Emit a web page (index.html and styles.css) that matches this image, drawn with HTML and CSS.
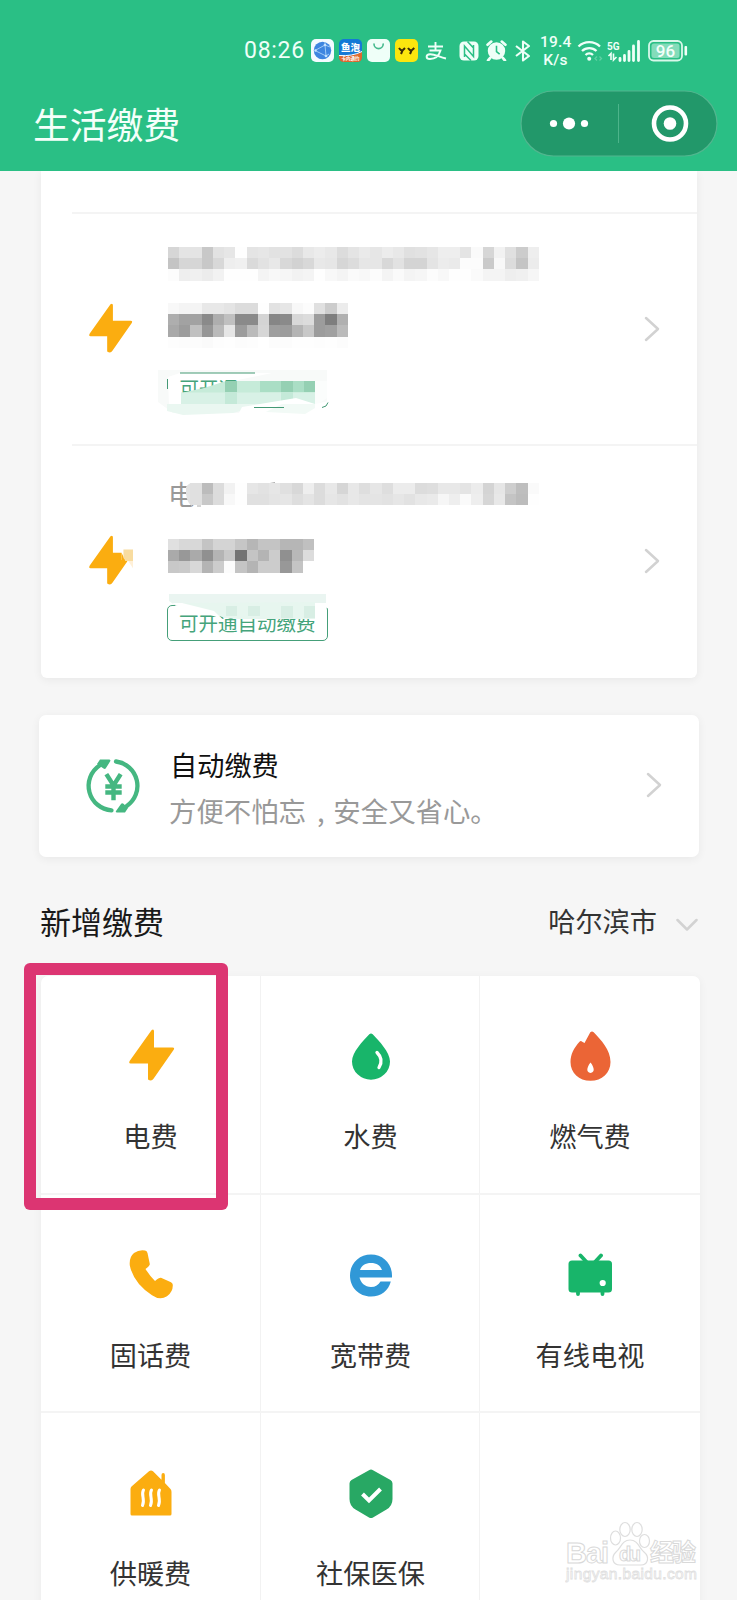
FILE: index.html
```html
<!DOCTYPE html>
<html lang="zh-CN">
<head>
<meta charset="utf-8">
<title>生活缴费</title>
<link rel="stylesheet" href="styles.css">
</head>
<body>
<header class="header">
  <div class="status">
    <span class="time">08:26</span>
    <svg class="app" viewBox="0 0 23 23"><rect width="23" height="23" rx="5" fill="#f4fbff"/><circle cx="11.5" cy="11.5" r="8.7" fill="#3f86e0"/><path d="M4 11.5 14 6 15 17 4 11.5M14 6l5 2M15 17l3-2M14 3v3" fill="none" stroke="#9fcbf7" stroke-width="1"/><g fill="#c5e2ff"><circle cx="14" cy="6" r="1.3"/><circle cx="15" cy="17" r="1.3"/><circle cx="4.5" cy="11.5" r="1.2"/></g></svg>
    <svg class="app" viewBox="0 0 23 23"><rect width="23" height="23" rx="5" fill="#1379d6"/><path d="M0 17q13 1 23-4v5q0 5-5 5H5q-5 0-5-5z" fill="#e0682c"/><path d="M0 16.5q13 1 23-4" fill="none" stroke="#fff"/><text x="11.5" y="12" class="fish">鱼泡</text><text x="11.5" y="21.3" class="fishsub">卡内通约</text></svg>
    <svg class="app" viewBox="0 0 23 23"><rect width="23" height="23" rx="5" fill="#effff8"/><path d="M7 5a4.6 4.6 0 0 0 9.2 0" fill="none" stroke="#45ba8d" stroke-width="1.6" stroke-linecap="round"/></svg>
    <svg class="app" viewBox="0 0 23 23"><rect width="23" height="23" rx="5" fill="#fbe60e"/><path d="M4 9q1.500 2.500 3.500 2.500L10 9M7.500 11.500 6 15M13 9q1.500 2.500 3.500 2.500L19.300 9M16.500 11.500 15 15" fill="none" stroke="#3a2d08" stroke-width="2"/></svg>
    <svg class="alipay" viewBox="0 0 22 20"><path d="M3 5.500h15M10.500 1v8.500M4.500 9.500h11c-1.500 5-5.500 8.500-10.500 8.500-4.500 0-4.500-4.500 0-4.800C10 13 14 16 21 17.500" fill="none" stroke="#effff8" stroke-width="1.900"/></svg>
    <svg class="nfc" viewBox="0 0 20 20"><rect x=".5" y=".5" width="19" height="19" rx="4.500" fill="#effff8"/><path d="M5.500 16V5L14.500 15.500V4M8.500 .500 14.500 7M5.500 13l6.500 6.500" fill="none" stroke="#2abf85" stroke-width="1.500"/></svg>
    <svg class="alarm" viewBox="0 0 20 20"><circle cx="10" cy="10.500" r="8.300" fill="#effff8"/><path d="M1.500 4.500 5 1.500M18.500 4.500 15 1.500M4 17l-2 2.500M16 17l2 2.500" stroke="#effff8" stroke-width="2.600" stroke-linecap="round"/><path d="M10 5.500v5.500l3 2.500" fill="none" stroke="#2abf85" stroke-width="1.500"/></svg>
    <svg class="bt" viewBox="0 0 16 22"><path d="M1 6l13 10-6 4.500V1.500L14 6 1 16" fill="none" stroke="#effff8" stroke-width="2.100" stroke-linejoin="round"/></svg>
    <span class="speed">19.4<br>K/s</span>
    <svg class="wifi" viewBox="0 0 26 22"><path d="M1.500 6.500a15.500 15.500 0 0 1 21.500 0M5 11a10.500 10.500 0 0 1 14.500 0M8.500 15a5.500 5.500 0 0 1 7.500 0" fill="none" stroke="#effff8" stroke-width="2.300"/><circle cx="12.200" cy="18.700" r="2" fill="#effff8"/><path d="m20 16.500-2 2 2 2M22.500 16.500l2 2-2 2" fill="none" stroke="#5fd0a4" stroke-width="1.300"/></svg>
    <svg class="signal" viewBox="0 0 34 22"><text x="0" y="10" class="five">5G</text><path d="M4 20v-6.500L1.500 16M6.500 13.500V20L9.500 17" fill="none" stroke="#effff8" stroke-width="1.600"/><path d="M13 20.500v-2M17.500 20.500v-5M22 20.500v-9M26.500 20.500V6M31.500 20.500V1.500" stroke="#effff8" stroke-width="2.800" stroke-linecap="round"/></svg>
    <svg class="battery" viewBox="0 0 40 22"><rect x="1" y="1" width="33" height="19.500" rx="4.500" fill="none" stroke="#d8f8ea" stroke-width="1.800"/><rect x="3.500" y="3.500" width="28" height="14.500" rx="2.500" fill="#84dcba"/><rect x="36.500" y="6" width="2.600" height="9.500" rx="1" fill="#effff8"/><text x="17.500" y="16.600" class="charge">96</text></svg>
  </div>
  <div class="navbar">
    <h1 class="title">生活缴费</h1>
    <svg class="capsule" viewBox="0 0 198 67"><rect x="1" y="1" width="196" height="65" rx="32.500" fill="#22986a" stroke="#52b68f" stroke-width="1.200"/><g fill="#fff"><circle cx="33.500" cy="33.500" r="3.600"/><circle cx="49" cy="33.500" r="6.100"/><circle cx="64.500" cy="33.500" r="3.600"/><circle cx="150" cy="33.500" r="6.300"/></g><path d="M98.500 14v39" stroke="#4db48b"/><circle cx="150" cy="33.500" r="16" fill="none" stroke="#fff" stroke-width="4.600"/></svg>
  </div>
</header>

<main class="page">
  <section class="card accounts">
    <div class="account">
      <svg class="bolt" viewBox="0 0 46 52"><use href="#bolt"/></svg>
      <div class="info">
        <svg class="line" data-y="5" data-cells="d6e4e4c8e2e6fee4e6e2e2dce8ece8dce4eae6ece8e0e2e6eeeee4fad6f2e0ccee/c4d6d6c8d8eef0dae2e8d8d2d8e8e6d6dce6e6d8e2d4d4e4eceafcfccaf8dcc4ec/fceef0ecf2fefefef4f8f6f2f4fef8f4faf8fcf4faf4f6fcf8fefefaf4f4eef0f6"></svg>
        <svg class="line" data-y="5" data-cells="f8f4f4e8e8e4dcdcfee2e6f8fce0ccec/aea2a28aaec08a8ad4868ad8dc9c7eb0/a89cc096bae69cbad69e9cb4c89ca0ba/fdfcfcfafdfefcfdfffcfcfefefdfefc"></svg>
        <div class="tag faded">
          <svg class="haze" viewBox="-12 -4 182 52"><path d="M-10-3h169v35l-12 8H5l-15-11z" fill="#f8faf9"/><path d="M0 4 12 0h92L70 7 38 14 13 19v14H1z" fill="#fff"/><path d="M12 0H87" stroke="#449975" stroke-width="1.200"/><path d="M-.500 6v10" stroke="#449975"/><text x="11.500" y="22.500" class="tagghost">可开通</text><path d="M13 20 36 15 58 8H147V31H13z" fill="#c6ebd9"/><path d="M13 19.500H147V31H13z" fill="#d8f1e6"/><path d="M57 8H69V19H57zM113 8h12v11h-12zM136 8h11v11h-11z" fill="#95d0b3"/><path d="M92 8h21v11H92zM125 8h11v11h-11z" fill="#aadec5"/><path d="M57 19h12v12H57zM113 19h12v12h-12z" fill="#c4e9d8"/><path d="M-1 31H98L65 40 15 42-1 38z" fill="#eaf7f1"/><path d="M147 8h12v17l-12 8z" fill="#fbfdfc"/><path d="M74 34l54-9 19 6 14-3v8l-18 6H70z" fill="#fff"/><path d="M98 39l16-8h33v4l-10 6z" fill="#f2faf6"/><path d="M86 34.500h30M154 34.500q5-.500 6-5" fill="none" stroke="#449975"/></svg>
        </div>
      </div>
      <svg class="chevron" viewBox="0 0 16 26"><path d="M2 2 14 13 2 24"/></svg>
    </div>
    <div class="account">
      <svg class="bolt" viewBox="0 0 46 52"><use href="#bolt"/><path d="M34 15h12v21l-6-9-6-1z" fill="#fff"/><path d="M34 18.500l4 8-4 6z" fill="#fbad10"/><path d="M36 15h11v12h-8l-3-3z" fill="#f8dca0"/><path d="M41 27h6v9z" fill="#fff0d8"/></svg>
      <div class="info">
        <div class="line masked">电<svg class="line over" data-y="9" data-from="2" data-cells="e0bcdcf2fee6e2e6e0d8eedce8d6e8dee6deececdcdee8e8e4ecd4e6cebefa/e0c8dcf8fee0e0e4e6dee4dce6e2e8e4e4e2e6e2e8eaf6eefaeed6e8c4bcfe"><path d="M18 13q3-4 6-4v23q-7-4-6-19" fill="#e2e2e2"/><path d="M86 9.500h7M102 9.500l5-1M29 32h4" stroke="#aaa" stroke-width="1"/></svg></div>
        <svg class="line" data-y="9" data-cells="e0d8d8c4d4d4c6b6c4c4b6b6c0/aa98aa90b4c874c4b4cc90b8dc/c8cad8b4ccfcc4b4cccc98c4ff"></svg>
        <div class="tag">可开通自动缴费
          <svg class="haze" viewBox="-12 -14 182 62"><path d="M1-11H158V0q-4 0-8 1H8L1-4z" fill="#eaf5f1"/><path d="M14-2 147-3V14H70L57 13z" fill="#e7f6ef"/><path d="M160-2v5l-13-1v-4zM4-2h10l32 8 8 8-20-7-20-4z" fill="#fff"/><path d="M58 1h11v10H58zM80 1h12v10H80zM113 1h12v12h-12zM136 1h11v12h-11z" fill="#d8eee4"/></svg>
        </div>
      </div>
      <svg class="chevron" viewBox="0 0 16 26"><path d="M2 2 14 13 2 24"/></svg>
    </div>
  </section>

  <section class="card auto">
    <svg class="cycle" viewBox="0 0 56 56"><g fill="none" stroke="#45b781" stroke-width="4.300" stroke-linecap="round"><path d="M14.500 7.500A24.500 24.500 0 0 0 26.500 52.300"/><path d="M31 3.500A24.500 24.500 0 0 1 41.500 48.200"/><path d="m22.500 18 6 9.500 6-9.500M22.500 28.500h12M22.500 34.500h12M28.500 28v12" stroke-width="4.400" stroke-linecap="square"/></g><path d="M15 1.500h9q2 0 1.200 1.800L21 10q-1 1.500-2.500.500L12 6zM40 54.500h-8q-2 0-.8-1.800L36 46q1-1.200 2.500-.200L43 50z" fill="#45b781"/></svg>
    <div class="autotext"><div class="autotitle">自动缴费</div><div class="autosub">方便不怕忘<span class="comma">,</span>安全又省心。</div></div>
    <svg class="chevron" viewBox="0 0 16 26"><path d="M2 2 14 13 2 24"/></svg>
  </section>

  <div class="heading">
    <h2 class="subtitle">新增缴费</h2>
    <span class="city">哈尔滨市</span>
    <svg class="down" viewBox="0 0 22 14"><path d="m1.500 2 9.500 9.500L20.500 2"/></svg>
  </div>

  <section class="grid">
    <div class="cell"><svg class="icon" viewBox="-3 0 52 52"><use href="#bolt" transform="translate(1 0)"/></svg><span>电费</span><i class="mark"></i></div>
    <div class="cell"><svg class="icon" viewBox="0 0 52 52"><path d="M24.300 5.200q1.700-1.600 3.400 0C34 12 45 23 45 32.500A19 18.200 0 0 1 7 32.500C7 23 18 12 24.300 5.200z" fill="#18b56a"/><path d="M32 23.500q7 7 2 15" fill="none" stroke="#fff" stroke-width="3.300" stroke-linecap="round"/></svg><span>水费</span></div>
    <div class="cell"><svg class="icon" viewBox="0 0 52 52"><path d="M26.300 3.300q1.700-1.600 3.400 0C37 11 46.500 21 46.500 33 46.500 44 38 51.800 26.500 51.800S6.500 44 6.500 33C6.500 25 10 19 15.500 12.700q1.300-1.200 2.700 0L20.500 14z" fill="#eb6536"/><path d="M26.500 33.500c4 5 4.500 10 0 10.500-4.500-.500-4-5.500 0-10.500z" fill="#fff"/></svg><span>燃气费</span></div>
    <div class="cell"><svg class="icon" viewBox="0 0 52 52"><path d="M9 5q5-3.500 11-2.500 2 .300 2.500 2.500l2.300 11q.200 1.500-4.300 5 4 6.500 9.500 12 4.500-3.800 6-3.200l10 4.500q2 1 1.800 3.200 0 6.500-5.800 10.800-7 4.500-15-1Q8.500 35 4.800 17.500 4 9 9 5z" fill="#fbad10"/></svg><span>固话费</span></div>
    <div class="cell"><svg class="icon" viewBox="0 0 52 52"><path fill-rule="evenodd" d="M26 6.500c12 0 21 9 21 21v2H14.500c1 5 5.500 9.500 11.500 9.500 4.500 0 7.500-2 9.500-5.500h10.300C43.500 42.500 36 48.500 26 48.500c-12 0-21-9-21-21s9-21 21-21zM15 22h22c-1.500-4.500-5.500-7-11-7s-9.500 2.500-11 7z" fill="#3098d7"/></svg><span>宽带费</span></div>
    <div class="cell"><svg class="icon" viewBox="0 0 52 52"><rect x="4.500" y="12.500" width="43.500" height="32" rx="3.500" fill="#18b56a"/><path d="m16.500 7.500 6 6.500M37 7.500 31 14M14 44v2M38.500 44v2" stroke="#18b56a" stroke-width="3.800" stroke-linecap="round"/><circle cx="38.700" cy="35" r="3.100" fill="#fff"/></svg><span>有线电视</span></div>
    <div class="cell"><svg class="icon" viewBox="0 0 52 52"><path d="M24 5.300q2-1.800 4 0l8.500 8.500V9q0-2 1.700-2t1.700 2v8l5.600 6q1 1 1 3v22q0 1.500-1.500 1.500H7Q5.500 49.500 5.500 48V23q0-1.500 1-2.500z" fill="#fbad10"/><path d="M18.500 24c-3 5 2 9-1 15.500M26.500 24c-3 5 2 9-1 15.500M34.500 24c-3 5 2 9-1 15.500" fill="none" stroke="#fff" stroke-width="3" stroke-linecap="round"/></svg><span>供暖费</span></div>
    <div class="cell"><svg class="icon" viewBox="0 0 52 52"><path d="M24 4.200q2-1.200 4 0L45.500 14q2 1.200 2 3.500V33q0 7-6 10.500L28 51.500q-2 1-4 0L10.500 43.500Q4.500 40 4.500 33V17.500q0-2.300 2-3.500z" fill="#28a864"/><path d="m17.500 28 6.500 6.500 11.500-11.500" fill="none" stroke="#fff" stroke-width="4"/></svg><span>社保医保</span></div>
    <div class="cell"></div>
  </section>
</main>

<svg class="watermark" viewBox="0 0 136 72">
  <text x="1" y="46" class="wm" textLength="43">Bai</text>
  <g fill="#fff" stroke="#dedede" stroke-width="1.200"><ellipse cx="50.500" cy="21" rx="5" ry="7"/><ellipse cx="60" cy="12.500" rx="5.200" ry="7"/><ellipse cx="72" cy="12.500" rx="5.200" ry="7"/><ellipse cx="79.500" cy="24" rx="5" ry="6.500"/><path d="M65 23c8 0 9 8 14 12 6 5 4 13-3 13H55c-8 0-9-8-4-13 5-4 6-12 14-12z"/></g>
  <text x="54" y="44" class="wm wmdu" textLength="22">du</text>
  <text x="85" y="44" class="wm wmcn" textLength="46">经验</text>
  <text x="1" y="62" class="wm wmurl" textLength="131">jingyan.baidu.com</text>
</svg>

<svg class="defs"><defs><path id="bolt" d="M22.500 1.200Q25-.500 25 2.500V18.500H43.500Q46 18.500 44.700 20.700L24.500 49.800Q22.500 53 19 50.500V34.500H1.800Q-.800 34.500.800 31.800z" fill="#fbad10"/></defs></svg>
<script src="mosaic.js"></script>
</body>
</html>
```
FILE: styles.css
```css
* { box-sizing: border-box; }
body { margin: 0; width: 737px; height: 1600px; overflow: hidden; position: relative; background: #f6f6f6; color: #333; font-family: "Noto Sans CJK SC", "Noto Sans", sans-serif; }
svg { display: block; flex: none; }
.defs { width: 0; height: 0; position: absolute; }
h1, h2 { margin: 0; font-weight: 400; }

.header { height: 171px; background: #2abf85; display: flex; flex-direction: column; }
.status { height: 88px; padding: 13px 0 0 244px; display: flex; align-items: center; color: #effff8; font-family: Roboto, sans-serif; }
.time { width: 67px; font-size: 23px; letter-spacing: .7px; line-height: 24px; }
.app { width: 23px; height: 23px; margin-right: 5px; }
.alipay { width: 22px; height: 20px; margin: 0 12px 0 2px; }
.nfc { width: 20px; height: 20px; margin-right: 7px; }
.alarm { width: 21px; height: 21px; margin-right: 8px; }
.bt { width: 16px; height: 22px; margin-right: 9px; }
.speed { width: 31px; padding-top: 1px; font-size: 15.500px; line-height: 18px; font-weight: 500; text-align: center; letter-spacing: .2px; margin-right: 6px; white-space: nowrap; }
.wifi { width: 26px; height: 22px; margin-right: 4px; }
.signal { width: 34px; height: 22px; margin-right: 7px; }
.battery { width: 40px; height: 22px; }
.fish { font: 900 9.500px "Noto Sans CJK SC", sans-serif; fill: #fff; text-anchor: middle; }
.fishsub { font: 700 4.500px "Noto Sans CJK SC", sans-serif; fill: #fff; text-anchor: middle; }
.five { font: 700 10px Roboto, sans-serif; fill: #effff8; }
.charge { font: 500 17px Roboto, sans-serif; fill: #f4fffa; text-anchor: middle; }

.navbar { height: 83px; padding: 1px 19px 13px 33px; display: flex; align-items: center; justify-content: space-between; }
.title { font-size: 36.800px; line-height: 44px; margin-top: -2px; color: #f4fffa; }
.capsule { width: 198px; height: 67px; }

.page { height: 1429px; overflow: hidden; padding: 0 37px 0 41px; }
.card { background: #fff; box-shadow: 0 2px 10px rgba(0, 0, 0, .06); display: flex; }
.accounts { width: 656px; height: 507px; padding: 41px 0 0 31px; border-radius: 0 0 6px 6px; flex-direction: column; }
.account { height: 232px; border-top: 2px solid #f4f4f4; display: flex; padding-left: 17px; }
.bolt { width: 44px; height: 52px; margin: 88px 35px 0 0; }
.info { width: 476px; padding-top: 28px; display: flex; flex-direction: column; }
.line { width: 400px; height: 56px; overflow: visible; font-size: 27px; color: #999; }
.masked { position: relative; line-height: 40px; }
.over { position: absolute; left: 0; top: 0; }
.tag { position: relative; width: 161px; height: 36px; margin: 19px 0 0 -1px; border: 1px solid #459f79; border-radius: 5px; padding-left: 11px; font-size: 19.500px; line-height: 34px; color: #45a47b; white-space: nowrap; }
.faded { border-color: transparent; }
.tagghost { font-size: 19.500px; fill: #45a47b; }
.haze { position: absolute; left: -12px; bottom: -13px; width: 182px; }
.chevron { width: 16px; height: 26px; margin-top: 102px; }
.chevron path, .down path { fill: none; stroke: #d2d2d2; stroke-width: 2.500; stroke-linecap: round; stroke-linejoin: round; }

.auto { width: 660px; height: 142px; margin: 37px 0 0 -2px; border-radius: 7px; padding-left: 46px; }
.cycle { width: 56px; height: 56px; margin-top: 43px; }
.autotext { width: 505px; padding: 29px 0 0 29px; }
.autotitle { font-size: 27.200px; line-height: 40px; color: #111; }
.autosub { font-size: 27.400px; line-height: 40px; margin: 6px 0 0 -1px; color: #999; }
.comma { display: inline-block; width: 27.400px; padding-left: 11px; }
.auto .chevron { margin-top: 57px; }

.heading { height: 119px; padding-top: 19px; display: flex; align-items: center; }
.subtitle { flex: 1; font-size: 31px; line-height: 40px; color: #1a1a1a; margin: -10px 0 0 -1px; }
.city { font-size: 27.200px; line-height: 40px; margin: -13px 19px 0 0; }
.down { width: 22px; height: 14px; margin: -3px 2px 0 0; }

.grid { width: 659px; height: 654px; display: grid; grid-template-columns: 220px 219px 220px; grid-template-rows: 219px 218.400px 218.400px; background: #fff; border-radius: 7px 7px 0 0; box-shadow: 0 2px 10px rgba(0, 0, 0, .05); }
.cell { position: relative; display: flex; flex-direction: column; align-items: center; padding-top: 53px; border-right: 1.500px solid #f2f2f2; border-bottom: 2px solid #f4f4f4; font-size: 27.200px; line-height: 40px; color: #333; }
.cell:nth-child(3n+2) { padding-left: 1px; }
.cell:nth-child(3n) { border-right: 0; }
.icon { width: 52px; height: 52px; margin-bottom: 34px; }
.mark { position: absolute; left: -17px; top: -13px; width: 204px; height: 247px; z-index: 2; background: #dc3572; border-radius: 6px; clip-path: polygon(evenodd, 0 0, 100% 0, 100% 100%, 0 100%, 0 0, 12px 12px, 192px 12px, 192px 235px, 12px 235px, 12px 12px); }

.watermark { position: absolute; left: 565px; top: 1517px; width: 136px; height: 72px; }
.wm { font: 700 29px "Liberation Sans", sans-serif; fill: #fff; stroke: #d9d9d9; stroke-width: 1px; }
.wmdu { font-size: 20px; }
.wmcn { font: 700 24px "Noto Sans CJK SC", sans-serif; }
.wmurl { font-size: 15.500px; font-weight: 400; stroke-width: .8px; stroke: #e0e0e0; }
```
FILE: mosaic.js
```js
// Draws the pixelated account lines from two-digit grey levels, one row per "/".
const CELL = 11.24;
document.querySelectorAll('svg[data-cells]').forEach((svg) => {
  const from = Number(svg.dataset.from || 0);
  const top = Number(svg.dataset.y);
  svg.dataset.cells.split('/').forEach((row, r) => {
    row.match(/../g).forEach((grey, c) => {
      const x = Math.round((c + from) * CELL);
      const y = Math.round(top + r * CELL);
      const rect = document.createElementNS('http://www.w3.org/2000/svg', 'rect');
      rect.setAttribute('x', x);
      rect.setAttribute('y', y);
      rect.setAttribute('width', Math.round((c + from + 1) * CELL) - x);
      rect.setAttribute('height', Math.round(top + (r + 1) * CELL) - y);
      rect.setAttribute('fill', '#' + grey + grey + grey);
      svg.appendChild(rect);
    });
  });
});
```
